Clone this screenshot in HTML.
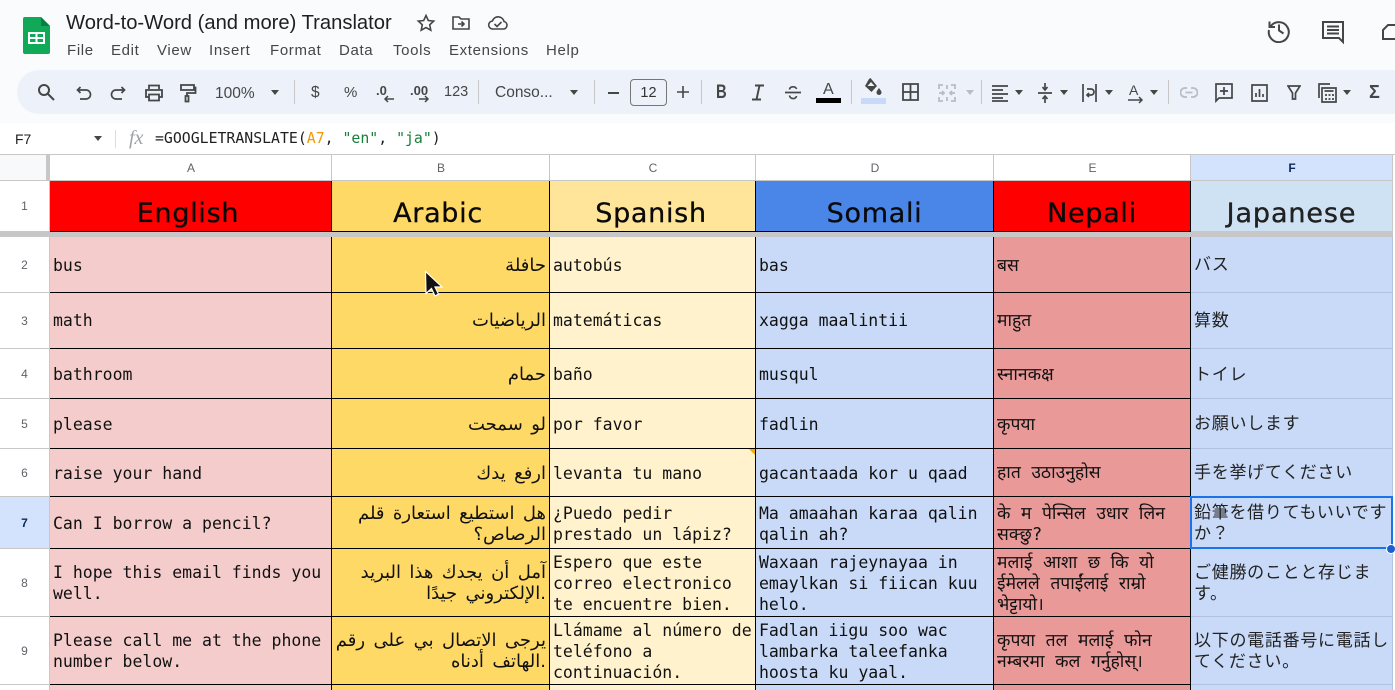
<!DOCTYPE html>
<html><head><meta charset="utf-8"><style>
html,body{margin:0;padding:0;width:1395px;height:690px;overflow:hidden;background:#f9fbfd;font-family:"Liberation Sans",sans-serif}
#p{position:relative;width:1395px;height:690px;overflow:hidden}
.t,.i,.c,.b{position:absolute}
.t{white-space:nowrap;color:#444746}
.m{top:42px;font-size:15px;color:#444746;letter-spacing:.65px}
.tb{top:84px;font-size:14.5px;color:#444746}
.sep{position:absolute;top:80px;width:1px;height:24px;background:#c7c7c7}
.car{position:absolute;top:90px;width:0;height:0;border-left:4.5px solid transparent;border-right:4.5px solid transparent;border-top:5px solid #444746}
.i{fill:none;stroke:#444746;stroke-width:2}
.c{box-sizing:border-box;display:flex;align-items:center;padding:0 3px 0 3px;font:16.5px/21px "DejaVu Sans Mono","Noto Sans CJK JP",monospace;color:#111;white-space:nowrap;border-right:1px solid #000;border-bottom:1px solid #000;overflow:hidden}
.r2,.r4,.r5,.r6,.r7{padding-top:2px}
.r8.C,.r8.D,.r9.C,.r9.D{padding-top:2px}
.h{align-items:flex-end;justify-content:center;font:27px/32px "DejaVu Sans",sans-serif;color:#0a0a0a;padding:0 0 1px;letter-spacing:.7px;-webkit-text-stroke:.3px #0a0a0a}
.A{left:50px;width:282px;background:#f4cccc}
.B{left:332px;width:218px;background:#ffd966;justify-content:flex-end;text-align:right;font-family:"DejaVu Sans",sans-serif;font-size:18px;word-spacing:2.700px}
.C{left:550px;width:206px;background:#fff2cc}
.D{left:756px;width:238px;background:#c9daf8}
.E{left:994px;width:197px;background:#ea9999;font-family:"DejaVu Sans Mono","Noto Sans CJK JP",sans-serif;font-size:17.5px;word-spacing:0}
.r2.E,.r4.E,.r5.E,.r7.E,.r8.E{padding-top:4px}
.r3.E,.r6.E,.r9.E{padding-top:2px}
.F{left:1191px;width:202px;background:#c9daf8;border-right:1px solid #b2c2df;border-bottom:1px solid #b2c2df;font:17px/21px "Noto Sans CJK JP",sans-serif;letter-spacing:.72px;color:#222;padding-top:0;padding-bottom:4px}
.r4.F{padding-bottom:2px}
.r1{top:181px;height:51px}.r2{top:237px;height:56px}.r3{top:293px;height:56px}.r4{top:349px;height:50px}.r5{top:399px;height:50px}.r6{top:449px;height:48px}.r7{top:497px;height:52px}.r8{top:549px;height:68px}.r9{top:617px;height:68px}.r10{top:685px;height:10px}
.b{left:0;width:50px;box-sizing:border-box;background:#fff;border-right:1px solid #c7c7c7;border-bottom:1px solid #c7c7c7;display:flex;align-items:center;justify-content:center;padding:1px 0 0;font-size:12px;color:#5f6368}
.b.r1{padding:0 0 1px}
.hd{position:absolute;top:155px;height:26px;box-sizing:border-box;background:#fff;border-right:1px solid #c7c7c7;border-bottom:1px solid #c7c7c7;text-align:center;font-size:12px;line-height:27px;color:#5f6368;padding-left:1px}
</style></head><body><div id="p">

<!-- logo -->
<svg class="i" style="left:22px;top:16px;stroke:none" width="29" height="39" viewBox="0 0 29 39"><path d="M3 1h16l9 9v26a2 2 0 0 1-2 2H3a2 2 0 0 1-2-2V3a2 2 0 0 1 2-2z" fill="#0fa958"/><path d="M19 1l9 9h-9z" fill="#0b7d43"/><path d="M6 16h17v12H6z" fill="#fff"/><path d="M8 18h5.500v3H8zM15.500 18H21v3h-5.500zM8 23h5.500v3H8zM15.500 23H21v3h-5.500z" fill="#0fa958"/></svg>

<div class="t" style="left:66px;top:11px;font-size:20.2px;color:#1f1f1f;line-height:24px">Word-to-Word (and more) Translator</div>
<svg class="i" style="left:416px;top:13px;stroke-width:1.6" width="20" height="20" viewBox="0 0 20 20"><path d="M10 2.500l2.300 5 5.400.6-4 3.700 1.100 5.400L10 14.500l-4.800 2.700 1.100-5.400-4-3.700 5.400-.6z"/></svg>
<svg class="i" style="left:451px;top:14px;stroke-width:1.6" width="20" height="18" viewBox="0 0 20 18"><path d="M2 3h6l2 2h8v10H2z"/><path d="M7 10h6M10.500 7.500L13 10l-2.500 2.500"/></svg>
<svg class="i" style="left:487px;top:13px;stroke-width:1.6" width="22" height="20" viewBox="0 0 22 20"><path d="M6 16a4 4 0 0 1-.6-8A6 6 0 0 1 17 8.500 3.800 3.800 0 0 1 16.500 16z"/><path d="M7.500 11l2.500 2.500 4.500-4.500"/></svg>

<div class="t m" style="left:67px">File</div>
<div class="t m" style="left:111px">Edit</div>
<div class="t m" style="left:157px">View</div>
<div class="t m" style="left:209px">Insert</div>
<div class="t m" style="left:270px">Format</div>
<div class="t m" style="left:339px">Data</div>
<div class="t m" style="left:393px">Tools</div>
<div class="t m" style="left:449px">Extensions</div>
<div class="t m" style="left:546px">Help</div>

<!-- top right -->
<svg class="i" style="left:1266px;top:17px" width="26" height="26" viewBox="0 0 26 26"><path d="M4.500 9.500A10 10 0 1 1 3 13"/><path d="M3.500 4.500v5.500H9M13 7.500V13.500l4.500 3"/></svg>
<svg class="i" style="left:1320px;top:19px" width="26" height="26" viewBox="0 0 26 26"><path d="M3 3h20v20l-4-4H3z"/><path d="M7 7.500h12M7 11h12M7 14.500h12"/></svg>
<svg class="i" style="left:1381px;top:23px" width="14" height="20" viewBox="0 0 14 20"><path d="M14 2H7L2 7v9h12"/></svg>

<!-- toolbar -->
<div style="position:absolute;left:17px;top:70px;width:1400px;height:44px;border-radius:23px;background:#edf2fa"></div>
<svg class="i" style="left:36px;top:82px" width="20" height="20" viewBox="0 0 20 20"><circle cx="8" cy="8" r="5"/><path d="M12 12l6 6"/></svg>
<svg class="i" style="left:75px;top:84px;stroke-width:1.700" width="18" height="18" viewBox="0 0 18 18"><path d="M5.500 3L2.500 6l3 3M3 6h8a4 4 0 0 1 0 9H5"/></svg>
<svg class="i" style="left:109px;top:84px;stroke-width:1.700" width="18" height="18" viewBox="0 0 18 18"><path d="M12.500 3l3 3-3 3M15 6H7a4 4 0 0 0 0 9h6"/></svg>
<svg class="i" style="left:144px;top:83px;stroke-width:1.800" width="20" height="20" viewBox="0 0 20 20"><path d="M5 6V2.500h10V6M5 14H2V7h16v7h-3M5 11.500h10v6H5z"/></svg>
<svg class="i" style="left:179px;top:83px;stroke-width:1.800" width="18" height="20" viewBox="0 0 18 20"><path d="M2 2h13v5H2zM15 4.500h1.500V10H8v3M6.500 13h3v5.500h-3z"/></svg>
<div class="t tb" style="left:215px;font-size:15.500px;top:85px">100%</div><div class="car" style="left:271px"></div>
<div class="sep" style="left:294px"></div>
<div class="t tb" style="left:311px;font-size:15.500px">$</div>
<div class="t tb" style="left:344px;font-size:15px">%</div>
<div class="t tb" style="left:376px;font-weight:bold;font-size:13px;top:83px">.0</div>
<svg class="i" style="left:383px;top:95px;stroke-width:1.500" width="12" height="8" viewBox="0 0 12 8"><path d="M11 4H2M5 1L2 4l3 3"/></svg>
<div class="t tb" style="left:410px;font-weight:bold;font-size:13px;top:83px">.00</div>
<svg class="i" style="left:418px;top:95px;stroke-width:1.500" width="12" height="8" viewBox="0 0 12 8"><path d="M1 4h9M7 1l3 3-3 3"/></svg>
<div class="t tb" style="left:444px">123</div>
<div class="sep" style="left:478px"></div>
<div class="t tb" style="left:495px;font-size:15.500px">Conso...</div><div class="car" style="left:570px"></div>
<div class="sep" style="left:594px"></div>
<div style="position:absolute;left:608px;top:92px;width:11px;height:1.500px;background:#444746"></div>
<div style="position:absolute;left:630px;top:79px;width:35px;height:25px;border:1px solid #747775;border-radius:4px;text-align:center;font-size:14.500px;line-height:26px;color:#333">12</div>
<svg class="i" style="left:676px;top:85px;stroke-width:1.600" width="14" height="14" viewBox="0 0 14 14"><path d="M7 1v12M1 7h12"/></svg>
<div class="sep" style="left:701px"></div>
<div class="t tb" style="left:716px;font-weight:bold;font-size:19px;top:82px;transform:scaleX(.78);transform-origin:left">B</div>
<svg class="i" style="left:751px;top:84px;stroke-width:1.900" width="14" height="17" viewBox="0 0 14 17"><path d="M4 1.500h9M1 15.500h9M8.500 1.500l-3 14"/></svg>
<svg class="i" style="left:784px;top:83px;stroke-width:1.700" width="18" height="19" viewBox="0 0 18 19"><path d="M1 9.500h16M5.500 6.500C6 3 12 3 12.500 6M5.500 12.500c.5 4 6.500 4 7 .5"/></svg>
<div class="t tb" style="left:823px;font-size:16px;top:81px">A</div><div style="position:absolute;left:816px;top:98px;width:25px;height:5px;background:#000"></div>
<div class="sep" style="left:851px"></div>
<svg class="i" style="left:863px;top:78px;stroke:none;fill:#444746" width="22" height="20" viewBox="0 0 22 20"><path d="M6 1l1.500-1 6.500 8-5.500 6L2 8z"/><path d="M4.500 8L8 4l3.500 4z" fill="#edf2fa"/><path d="M16 10s2.500 3 2.500 4.500a2.500 2.500 0 0 1-5 0C13.500 13 16 10 16 10z"/></svg>
<div style="position:absolute;left:861px;top:98px;width:25px;height:6px;background:#c9daf8"></div>
<svg class="i" style="left:902px;top:83px;stroke-width:1.800" width="17" height="18" viewBox="0 0 17 18"><path d="M1 1h15v16H1zM8.500 1v16M1 9h15"/></svg>
<svg class="i" style="left:938px;top:84px;stroke:#b9bdc3;stroke-width:1.800" width="18" height="18" viewBox="0 0 18 18"><path d="M1 5V1h4M13 1h4v4M1 13v4h4M13 17h4v-4M1 9h5M17 9h-5M9 1v4M9 13v4M4 7l2 2-2 2M14 7l-2 2 2 2"/></svg>
<div class="car" style="left:966px;border-top-color:#b9bdc3"></div>
<div class="sep" style="left:981px"></div>
<svg class="i" style="left:992px;top:84px;stroke-width:1.700" width="17" height="18" viewBox="0 0 17 18"><path d="M0 2h16M0 6h11M0 10h16M0 14h11M0 17h16"/></svg><div class="car" style="left:1015px"></div>
<svg class="i" style="left:1038px;top:83px;stroke-width:1.700" width="14" height="20" viewBox="0 0 14 20"><path d="M0 10h14M7 0v6M4.500 4L7 7l2.500-3M7 20v-6M4.500 16L7 13l2.500 3"/></svg><div class="car" style="left:1060px"></div>
<svg class="i" style="left:1082px;top:84px;stroke-width:1.700" width="16" height="18" viewBox="0 0 16 18"><path d="M1 0v18M14 0v18M5 5h4a2.500 2.500 0 0 1 0 6H5M7 9l-2 2 2 2"/></svg><div class="car" style="left:1105px"></div>
<div class="t tb" style="left:1129px;font-size:14px;top:82px">A</div><svg class="i" style="left:1128px;top:96px;stroke-width:1.500" width="16" height="8" viewBox="0 0 16 8"><path d="M0 4h14M11 1l3 3-3 3"/></svg><div class="car" style="left:1150px"></div>
<div class="sep" style="left:1168px"></div>
<svg class="i" style="left:1180px;top:87px;stroke:#b9bdc3;stroke-width:1.800" width="18" height="11" viewBox="0 0 18 11"><path d="M7 1H5a4 4 0 0 0 0 9h2M11 1h2a4 4 0 0 1 0 9h-2M5.500 5.500h7"/></svg>
<svg class="i" style="left:1215px;top:83px;stroke-width:1.700" width="18" height="20" viewBox="0 0 18 20"><path d="M1 1h16v14H4l-3 3zM9 4v8M5 8h8"/></svg>
<svg class="i" style="left:1251px;top:84px;stroke-width:1.700" width="17" height="18" viewBox="0 0 17 18"><path d="M1 1h15v16H1zM5 13V9M8.500 13V5M12 13v-3"/></svg>
<svg class="i" style="left:1287px;top:85px;stroke-width:1.700" width="14" height="15" viewBox="0 0 14 15"><path d="M1 1h12L8.500 8v6h-3V8z"/></svg>
<svg class="i" style="left:1318px;top:83px;stroke-width:1.700" width="19" height="20" viewBox="0 0 19 20"><path d="M1 15V1h11M4 5h14v14H4zM6.500 8h9M7 12h2M10.500 12h2M14 12h2M7 16h2M10.500 16h2M14 16h2"/></svg><div class="car" style="left:1343px"></div>
<div class="t tb" style="left:1369px;font-weight:bold;font-size:18px;top:82px">Σ</div>

<!-- formula bar -->
<div style="position:absolute;left:0;top:123px;width:1395px;height:32px;background:#fff;border-bottom:1px solid #c7c7c7;box-sizing:border-box"></div>
<div class="t" style="left:15px;top:131px;font-size:14px;color:#1f1f1f">F7</div>
<div class="car" style="left:94px;top:136px"></div>
<div style="position:absolute;left:115px;top:130px;width:1px;height:18px;background:#dadce0"></div>
<div class="t" style="left:129px;top:127px;font:italic 20px 'Liberation Serif';color:#a0a3a6">fx</div>
<div class="t" style="left:155px;top:130px;font:14.840px/18px 'DejaVu Sans Mono',monospace;color:#1f1f1f">=GOOGLETRANSLATE(<span style="color:#f29900">A7</span>, <span style="color:#188038">"en"</span>, <span style="color:#188038">"ja"</span>)</div>

<!-- grid bg -->
<div style="position:absolute;left:0;top:155px;width:1395px;height:535px;background:#fff"></div>
<div style="position:absolute;left:0;top:155px;width:46px;height:26px;background:#f8f9fa;border-bottom:1px solid #c7c7c7;box-sizing:border-box"></div>
<div style="position:absolute;left:46px;top:155px;width:4px;height:26px;background:#c7c7c7"></div>
<div class="hd" style="left:50px;width:282px">A</div>
<div class="hd" style="left:332px;width:218px">B</div>
<div class="hd" style="left:550px;width:206px">C</div>
<div class="hd" style="left:756px;width:238px">D</div>
<div class="hd" style="left:994px;width:197px">E</div>
<div class="hd" style="left:1191px;width:202px;background:#d3e3fd;color:#0b2a5b;font-weight:bold">F</div>

<div class="b r1">1</div><div class="b r2">2</div><div class="b r3">3</div><div class="b r4">4</div><div class="b r5">5</div><div class="b r6">6</div>
<div class="b r7" style="background:#d3e3fd;color:#0b2a5b;font-weight:bold">7</div><div class="b r8">8</div><div class="b r9">9</div><div class="b r10"></div>

<div class="c h r1 A" style="background:#f00;padding-right:5px">English</div>
<div class="c h r1 B" style="font:27px/32px 'DejaVu Sans',sans-serif;justify-content:center;padding-right:5px;word-spacing:0">Arabic</div>
<div class="c h r1 C" style="background:#ffe599;padding-right:3px">Spanish</div>
<div class="c h r1 D" style="background:#4a86e8">Somali</div>
<div class="c h r1 E" style="background:#f00;font:27px/32px 'DejaVu Sans',sans-serif;word-spacing:0;padding-top:0">Nepali</div>
<div class="c h r1 F" style="background:#cfe2f3;font:27px/32px 'DejaVu Sans',sans-serif;letter-spacing:.9px;border-color:#c7c7c7;padding-bottom:1px">Japanese</div>

<div style="position:absolute;left:0;top:232px;width:1393px;height:5px;background:#c7c7c7"></div>

<div class="c r2 A">bus</div><div class="c r2 B">حافلة</div><div class="c r2 C">autobús</div><div class="c r2 D">bas</div><div class="c r2 E">बस</div><div class="c r2 F">バス</div>
<div class="c r3 A">math</div><div class="c r3 B">الرياضيات</div><div class="c r3 C">matemáticas</div><div class="c r3 D">xagga maalintii</div><div class="c r3 E">माहुत</div><div class="c r3 F">算数</div>
<div class="c r4 A">bathroom</div><div class="c r4 B">حمام</div><div class="c r4 C">baño</div><div class="c r4 D">musqul</div><div class="c r4 E">स्नानकक्ष</div><div class="c r4 F">トイレ</div>
<div class="c r5 A">please</div><div class="c r5 B">لو سمحت</div><div class="c r5 C">por favor</div><div class="c r5 D">fadlin</div><div class="c r5 E">कृपया</div><div class="c r5 F">お願いします</div>
<div class="c r6 A">raise your hand</div><div class="c r6 B">ارفع يدك</div><div class="c r6 C">levanta tu mano</div><div class="c r6 D">gacantaada kor u qaad</div><div class="c r6 E">हात उठाउनुहोस</div><div class="c r6 F">手を挙げてください</div>
<div class="c r7 A">Can I borrow a pencil?</div>
<div class="c r7 B"><div><bdi>هل استطيع استعارة قلم</bdi><br><bdi>الرصاص؟</bdi></div></div>
<div class="c r7 C"><div>¿Puedo pedir<br>prestado un lápiz?</div></div>
<div class="c r7 D"><div>Ma amaahan karaa qalin<br>qalin ah?</div></div>
<div class="c r7 E"><div>के म पेन्सिल उधार लिन<br>सक्छु?</div></div>
<div class="c r7 F"><div>鉛筆を借りてもいいです<br>か？</div></div>
<div class="c r8 A"><div>I hope this email finds you<br>well.</div></div>
<div class="c r8 B"><div><bdi>آمل أن يجدك هذا البريد</bdi><br>الإلكتروني جيدًا.</div></div>
<div class="c r8 C"><div>Espero que este<br>correo electronico<br>te encuentre bien.</div></div>
<div class="c r8 D"><div>Waxaan rajeynayaa in<br>emaylkan si fiican kuu<br>helo.</div></div>
<div class="c r8 E"><div>मलाई आशा छ कि यो<br>ईमेलले तपाईंलाई राम्रो<br>भेट्टायो।</div></div>
<div class="c r8 F"><div>ご健勝のことと存じま<br>す。</div></div>
<div class="c r9 A"><div>Please call me at the phone<br>number below.</div></div>
<div class="c r9 B"><div><bdi>يرجى الاتصال بي على رقم</bdi><br>الهاتف أدناه.</div></div>
<div class="c r9 C"><div>Llámame al número de<br>teléfono a<br>continuación.</div></div>
<div class="c r9 D"><div>Fadlan iigu soo wac<br>lambarka taleefanka<br>hoosta ku yaal.</div></div>
<div class="c r9 E"><div>कृपया तल मलाई फोन<br>नम्बरमा कल गर्नुहोस्।</div></div>
<div class="c r9 F"><div>以下の電話番号に電話し<br>てください。</div></div>
<div class="c r10 A"></div><div class="c r10 B"></div><div class="c r10 C"></div><div class="c r10 D"></div><div class="c r10 E"></div><div class="c r10 F"></div>

<!-- note triangle -->
<div style="position:absolute;left:749px;top:449px;width:0;height:0;border-top:6px solid #f9ab00;border-left:6px solid transparent"></div>
<!-- selection -->
<div style="position:absolute;left:1190px;top:496px;width:203px;height:53px;box-sizing:border-box;border:2px solid #1a73e8"></div>
<div style="position:absolute;left:1386px;top:544px;width:8px;height:8px;border-radius:50%;background:#1a5fd0;border:1px solid #fff"></div>
<!-- cursor -->
<svg class="i" style="left:422px;top:269px;stroke:#fff;stroke-width:1.200" width="24" height="30" viewBox="0 0 24 30"><path d="M3.500 2.500L20 18h-7l3.500 7-3.500 2-3.500-7.500-5.500 5z" fill="#111"/></svg>
</div></body></html>
